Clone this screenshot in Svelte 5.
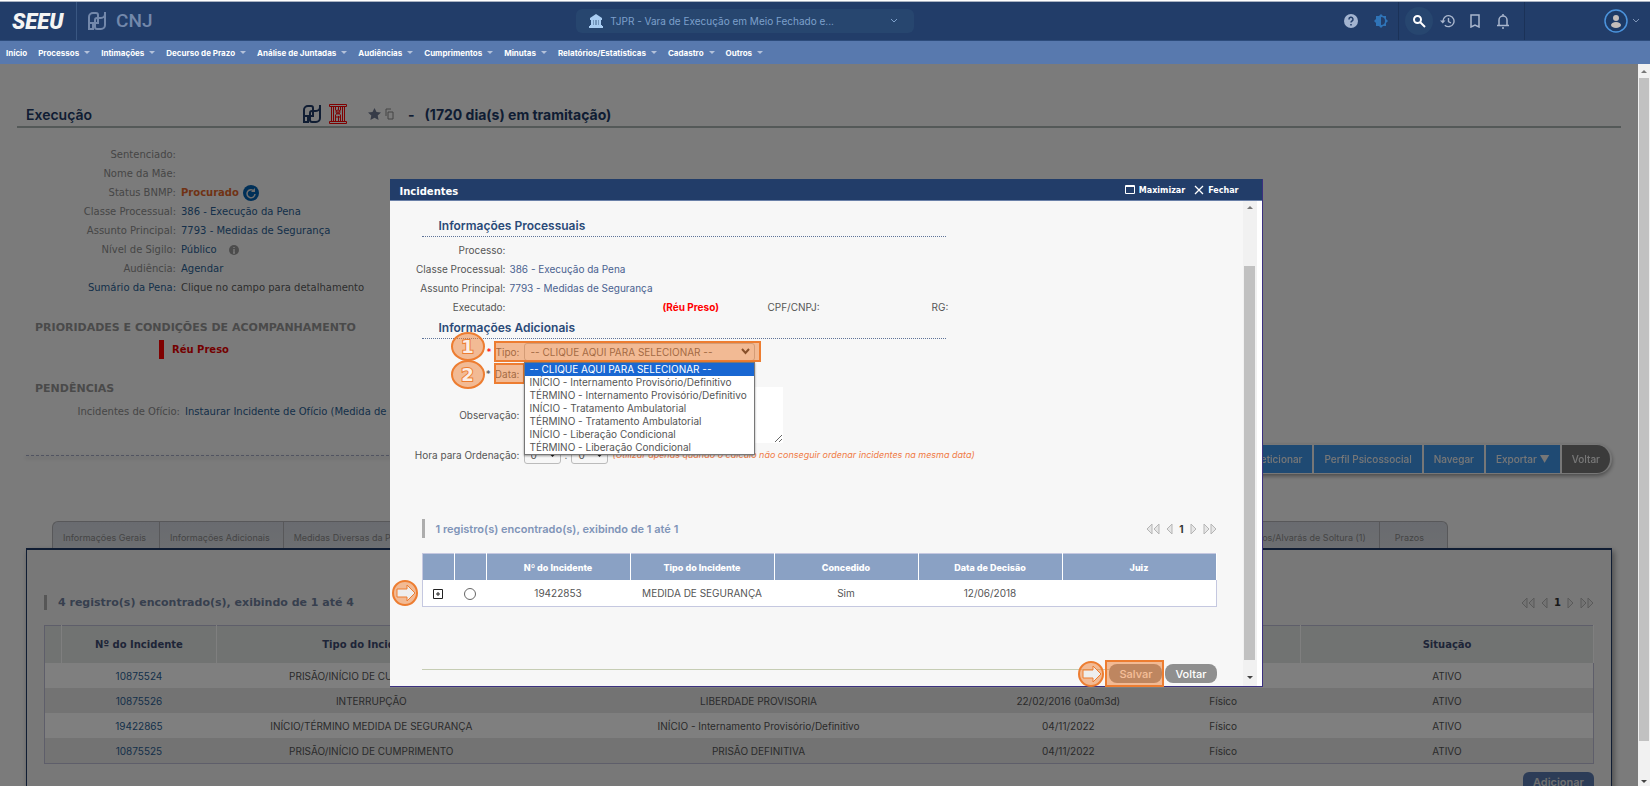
<script lang="ts">
  interface Incident {
    id: string
    type: string
    description: string
    date: string
    process: string
    status: string
  }

  const menu = [
    'Início',
    'Processos',
    'Intimações',
    'Decurso de Prazo',
    'Análise de Juntadas',
    'Audiências',
    'Cumprimentos',
    'Minutas',
    'Relatórios/Estatísticas',
    'Cadastro',
    'Outros',
  ]

  const tabs = [
    'Informações Gerais',
    'Informações Adicionais',
    'Medidas Diversas da Prisão',
    'Partes',
    'Movimentações',
    'Mandados/Alvarás de Soltura (1)',
    'Prazos',
  ]

  const incidents: Incident[] = [
    { id: '10875524', type: 'PRISÃO/INÍCIO DE CUMPRIMENTO', description: 'PRISÃO DEFINITIVA', date: '22/02/2016', process: 'Físico', status: 'ATIVO' },
    { id: '10875526', type: 'INTERRUPÇÃO', description: 'LIBERDADE PROVISORIA', date: '22/02/2016 (0a0m3d)', process: 'Físico', status: 'ATIVO' },
    { id: '19422865', type: 'INÍCIO/TÉRMINO MEDIDA DE SEGURANÇA', description: 'INÍCIO - Internamento Provisório/Definitivo', date: '04/11/2022', process: 'Físico', status: 'ATIVO' },
    { id: '10875525', type: 'PRISÃO/INÍCIO DE CUMPRIMENTO', description: 'PRISÃO DEFINITIVA', date: '04/11/2022', process: 'Físico', status: 'ATIVO' },
  ]

  const options = [
    '-- CLIQUE AQUI PARA SELECIONAR --',
    'INÍCIO - Internamento Provisório/Definitivo',
    'TÉRMINO - Internamento Provisório/Definitivo',
    'INÍCIO - Tratamento Ambulatorial',
    'TÉRMINO - Tratamento Ambulatorial',
    'INÍCIO - Liberação Condicional',
    'TÉRMINO - Liberação Condicional',
  ]

  let selected = $state(options[0])
  let listOpen = $state(true)
  let modalOpen = $state(true)

  function choose(option: string) {
    selected = option
    listOpen = false
  }
</script>

{#snippet pdpj()}
  <svg class="pdpj" viewBox="0 0 18 18" fill="none" stroke="currentColor" stroke-width="2">
    <path d="M5 11v6H1V5a4 4 0 0 1 4-4h3a2 2 0 0 1 2 2v8H1" />
    <path d="M17 0v13a4 4 0 0 1-4 4H9a2 2 0 0 1-2-2V8a2 2 0 0 1 2-2h4a4 4 0 0 0 4-4" />
  </svg>
{/snippet}

{#snippet arrow()}
  <svg class="arrow" viewBox="0 0 28 28">
    <circle cx="14" cy="14" r="12" fill="#ed7d31" fill-opacity=".5" stroke="#ed7d31" stroke-width="2" />
    <path d="M6 10h10V6l8 8-8 8v-4H6z" fill="#eee" stroke="#ed7d31" stroke-width="1" />
  </svg>
{/snippet}

{#snippet pager()}
  <div class="pager">
    <button type="button" aria-label="Primeira página">
      <svg width="14" height="12" viewBox="0 0 14 12"><path d="M6 1v10L1 6zM13 1v10L8 6z" /></svg>
    </button>
    <button type="button" aria-label="Página anterior">
      <svg width="7" height="12" viewBox="0 0 7 12"><path d="M6 1v10L1 6z" /></svg>
    </button>
    <b>1</b>
    <button type="button" aria-label="Próxima página">
      <svg width="7" height="12" viewBox="0 0 7 12"><path d="M1 1v10l5-5z" /></svg>
    </button>
    <button type="button" aria-label="Última página">
      <svg width="14" height="12" viewBox="0 0 14 12"><path d="M1 1v10l5-5zM8 1v10l5-5z" /></svg>
    </button>
  </div>
{/snippet}

{#snippet chevron()}
  <svg class="chevron" width="8" height="6" viewBox="0 0 8 6" fill="none" stroke="currentColor">
    <path d="M1 1l3 3 3-3" />
  </svg>
{/snippet}

<div class="page">
  <header class="topbar">
    <div class="brand">SEEU</div>
    <div class="partners">
      {@render pdpj()}
      <span class="cnj">CNJ</span>
    </div>
    <div class="court">
      <svg width="14" height="14" viewBox="0 0 14 14" fill="#a9cdf2">
        <path d="M7 0l6 4v2H1V4zM2 6h2v5H2zM5 6h1v5H5zM8 6h1v5H8zM10 6h2v5h-2zM1 11h12v1H1zM0 12h14v2H0z" />
        <path d="M4 6h6v5H4z" opacity=".6" />
      </svg>
      <select aria-label="Vara">
        <option>TJPR - Vara de Execução em Meio Fechado e...</option>
      </select>
      {@render chevron()}
    </div>
    <div class="tools">
      <div class="group help">
        <button type="button" aria-label="Ajuda">
          <svg width="14" height="14" viewBox="0 0 14 14">
            <circle cx="7" cy="7" r="7" fill="#a3b4d0" />
            <path d="M5 5.5a2 2 0 1 1 3 1.5Q7 7.5 7 8.5M7 10v1.5" fill="none" stroke="#223d69" stroke-width="1.5" />
          </svg>
        </button>
        <button type="button" aria-label="Contraste">
          <svg width="14" height="14" viewBox="0 0 14 14" fill="#2f74b8">
            <path d="M7 0l2 2h3v3l2 2-2 2v3H9l-2 2-2-2H2V9L0 7l2-2V2h3z" />
            <path d="M7 3a4 4 0 0 1 0 8z" fill="#223d69" />
          </svg>
        </button>
      </div>
      <div class="group shortcuts">
        <button type="button" class="round" aria-label="Pesquisar">
          <svg width="14" height="14" viewBox="0 0 14 14" fill="none" stroke="#fff" stroke-width="2">
            <circle cx="5.5" cy="5.5" r="3.5" />
            <path d="M8 8l5 5" />
          </svg>
        </button>
        <button type="button" aria-label="Histórico">
          <svg width="15" height="14" viewBox="0 0 15 14" fill="none" stroke="#a9b6cd" stroke-width="1.4">
            <path d="M3 7a5.5 5.5 0 1 1 1.8 4.2M8.5 4v3.5l2.5 1.5" />
            <path d="M0 6.5h5.5L2.8 9.5z" fill="#a9b6cd" stroke="none" />
          </svg>
        </button>
        <button type="button" aria-label="Favoritos">
          <svg width="12" height="14" viewBox="0 0 12 14" fill="none" stroke="#a9b6cd" stroke-width="1.5">
            <path d="M2 1h8v12l-4-2-4 2z" />
          </svg>
        </button>
        <button type="button" aria-label="Notificações">
          <svg width="14" height="16" viewBox="0 0 14 16" fill="none" stroke="#a9b6cd" stroke-width="1.5">
            <path d="M1 12.5h12M3 12V7a4 4 0 0 1 8 0v5M7 1v2M6 15h2" />
          </svg>
        </button>
      </div>
      <div class="group user">
        <button type="button" aria-label="Usuário">
          <svg width="24" height="24" viewBox="0 0 24 24">
            <circle cx="12" cy="12" r="11" fill="#1d3a66" stroke="#4b93dc" stroke-width="1.5" />
            <circle cx="12" cy="9" r="3" fill="#c3bdba" />
            <ellipse cx="12" cy="16" rx="5" ry="3" fill="#c3bdba" />
          </svg>
          {@render chevron()}
        </button>
      </div>
    </div>
  </header>

  <nav class="menu">
    {#each menu as item, i}
      <a href="#menu">{item}{#if i > 0}<span class="caret"></span>{/if}</a>
    {/each}
  </nav>

  <div class="workspace">
    <main>
      <div class="title">
        <h1>Execução</h1>
        {@render pdpj()}
        <svg class="jail" width="18" height="20" viewBox="0 0 18 20" fill="none" stroke="#f00">
          <path d="M.5.5h17v2H.5zM.5 17.5h17v2H.5zM2.5 3v14M4.5 3v14M13.5 3v14M15.5 3v14" />
          <path d="M6.5 3v3l5 5v6M11.5 3v3l-5 5v6M9.5 3v3M9.5 12v5M7 13h5" />
          <circle cx="9" cy="8" r="2" />
        </svg>
        <svg class="star" width="13" height="12" viewBox="0 0 13 12" fill="#6c7690">
          <path d="M6.5 0l2 4 4.5.6-3.3 3 .9 4.4-4.1-2.2L2.4 12l.9-4.4L0 4.6 4.5 4z" />
        </svg>
        <svg class="copy" width="9" height="12" viewBox="0 0 9 12" fill="none" stroke="#888">
          <path d="M1 8V1h5M3 4h5v7H3z" />
        </svg>
        <strong>-</strong>
        <strong class="days">(1720 dia(s) em tramitação)</strong>
      </div>

      <dl class="fields">
        <dt>Sentenciado:</dt>
        <dd></dd>
        <dt>Nome da Mãe:</dt>
        <dd></dd>
        <dt>Status BNMP:</dt>
        <dd>
          <b class="wanted">Procurado</b>
          <svg width="16" height="16" viewBox="0 0 16 16">
            <circle cx="8" cy="8" r="8" fill="#0060b0" />
            <path d="M11 6a4 4 0 1 0 1 3" fill="none" stroke="#ddd" stroke-width="1.5" />
            <path d="M12 3v4H8z" fill="#ddd" />
          </svg>
        </dd>
        <dt>Classe Processual:</dt>
        <dd><a href="#classe">386 - Execução da Pena</a></dd>
        <dt>Assunto Principal:</dt>
        <dd><a href="#assunto">7793 - Medidas de Segurança</a></dd>
        <dt>Nível de Sigilo:</dt>
        <dd>
          <a href="#sigilo">Público</a>
          <svg class="info" width="10" height="10" viewBox="0 0 10 10">
            <circle cx="5" cy="5" r="5" fill="#999" />
            <path d="M5 2v1M5 4v4M4 8h2" stroke="#eee" stroke-width="1.5" />
          </svg>
        </dd>
        <dt>Audiência:</dt>
        <dd><a href="#audiencia">Agendar</a></dd>
        <dt><a href="#sumario">Sumário da Pena:</a></dt>
        <dd>Clique no campo para detalhamento</dd>
      </dl>

      <h2>PRIORIDADES E CONDIÇÕES DE ACOMPANHAMENTO</h2>
      <p class="priority">Réu Preso</p>
      <h2>PENDÊNCIAS</h2>
      <dl class="fields pending">
        <dt>Incidentes de Ofício:</dt>
        <dd><a href="#oficio">Instaurar Incidente de Ofício (Medida de Segurança)</a></dd>
      </dl>

      <div class="actions">
        <hr />
        <button type="button">Peticionar</button>
        <button type="button">Perfil Psicossocial</button>
        <button type="button">Navegar</button>
        <button type="button">Exportar ▼</button>
        <button type="button" class="back">Voltar</button>
      </div>

      <div class="tabs" role="tablist">
        {#each tabs as tab}
          <button type="button" role="tab" class:grow={tab === 'Movimentações'}>{tab}</button>
        {/each}
      </div>

      <section class="panel">
        <div class="summary">
          <strong>4 registro(s) encontrado(s), exibindo de 1 até 4</strong>
          {@render pager()}
        </div>
        <table class="incidents">
          <colgroup>
            <col class="c-icon" />
            <col class="c-id" />
            <col class="c-type" />
            <col class="c-desc" />
            <col class="c-date" />
            <col class="c-proc" />
            <col />
          </colgroup>
          <thead>
            <tr>
              <th></th>
              <th>Nº do Incidente</th>
              <th>Tipo do Incidente</th>
              <th>Descrição</th>
              <th>Data</th>
              <th>Tipo Processo</th>
              <th>Situação</th>
            </tr>
          </thead>
          <tbody>
            {#each incidents as row}
              <tr>
                <td></td>
                <td><a href="#incidente">{row.id}</a></td>
                <td>{row.type}</td>
                <td>{row.description}</td>
                <td>{row.date}</td>
                <td>{row.process}</td>
                <td>{row.status}</td>
              </tr>
            {/each}
          </tbody>
        </table>
        <button type="button" class="add">Adicionar</button>
      </section>
    </main>
    {#if modalOpen}
      <div class="backdrop"></div>
    {/if}
    <div class="scrollbar">
      <span class="up"></span>
      <span class="thumb"></span>
      <span class="down"></span>
    </div>
  </div>

  {#if modalOpen}
    <div class="layer">
      <div class="modal" role="dialog" aria-modal="true" aria-labelledby="modal-title">
        <div class="modal-head">
          <h2 id="modal-title">Incidentes</h2>
          <button type="button">
            <svg width="10" height="10" viewBox="0 0 10 10" fill="none" stroke="#fff">
              <path d="M.5.5h9v8h-9zM1 1.5h8" />
            </svg>
            Maximizar
          </button>
          <button type="button" onclick={() => (modalOpen = false)}>
            <svg width="10" height="10" viewBox="0 0 10 10" fill="none" stroke="#fff" stroke-width="1.3">
              <path d="M1 1l8 8M9 1L1 9" />
            </svg>
            Fechar
          </button>
        </div>

        <div class="modal-body">
          <div class="modal-content">
            <h3>Informações Processuais</h3>
            <dl class="process">
              <dt>Processo:</dt>
              <dd></dd>
              <dt>Classe Processual:</dt>
              <dd>386 - Execução da Pena</dd>
              <dt>Assunto Principal:</dt>
              <dd>7793 - Medidas de Segurança</dd>
              <dt>Executado:</dt>
              <dd class="person">
                <b>(Réu Preso)</b>
                <span>CPF/CNPJ:</span>
                <span>RG:</span>
              </dd>
            </dl>

            <h3>Informações Adicionais</h3>
            <form class="form">
              <div class="row">
                <label for="tipo"><i class="required">*</i> Tipo:</label>
                <div class="select tipo">
                  <select id="tipo" bind:value={selected} onmousedown={() => (listOpen = !listOpen)}>
                    {#each options as option}
                      <option>{option}</option>
                    {/each}
                  </select>
                  <svg width="9" height="7" viewBox="0 0 9 7" fill="none" stroke="#222" stroke-width="2">
                    <path d="M1 1l3.5 4L8 1" />
                  </svg>
                  {#if listOpen}
                    <ul class="list" role="listbox" aria-label="Tipo">
                      {#each options as option}
                        <!-- svelte-ignore a11y_click_events_have_key_events -->
                        <li role="option" aria-selected={option === selected} onclick={() => choose(option)}>{option}</li>
                      {/each}
                    </ul>
                  {/if}
                </div>
                <span class="step">1</span>
                <span class="mark mark-tipo"></span>
              </div>
              <div class="row date">
                <label for="data"><i>*</i> Data:</label>
                <input id="data" type="text" />
                <span class="step">2</span>
                <span class="mark mark-data"></span>
              </div>
              <div class="row notes">
                <label for="obs">Observação:</label>
                <textarea id="obs"></textarea>
              </div>
              <div class="row">
                <label for="hora">Hora para Ordenação:</label>
                <div class="select hour">
                  <select id="hora"><option>0</option></select>
                  <svg width="7" height="5" viewBox="0 0 7 5" fill="none" stroke="#222" stroke-width="2"><path d="M1 1l2.5 2.5L6 1" /></svg>
                </div>
                <span>:</span>
                <div class="select hour">
                  <select aria-label="Minuto"><option>0</option></select>
                  <svg width="7" height="5" viewBox="0 0 7 5" fill="none" stroke="#222" stroke-width="2"><path d="M1 1l2.5 2.5L6 1" /></svg>
                </div>
                <em>(Utilizar apenas quando o cálculo não conseguir ordenar incidentes na mesma data)</em>
              </div>
            </form>

            <div class="summary found">
              <strong>1 registro(s) encontrado(s), exibindo de 1 até 1</strong>
              {@render pager()}
            </div>
            <div class="result">
              <table>
                <colgroup>
                  <col class="r-icon" />
                  <col class="r-icon" />
                  <col class="r-data" />
                  <col class="r-data" />
                  <col class="r-data" />
                  <col class="r-data" />
                  <col />
                </colgroup>
                <thead>
                  <tr>
                    <th></th>
                    <th></th>
                    <th>Nº do Incidente</th>
                    <th>Tipo do Incidente</th>
                    <th>Concedido</th>
                    <th>Data de Decisão</th>
                    <th>Juiz</th>
                  </tr>
                </thead>
                <tbody>
                  <tr>
                    <td>
                      <button type="button" class="expand" aria-label="Expandir">
                        <svg width="10" height="10" viewBox="0 0 10 10" fill="none" stroke="#222">
                          <path d="M.5.5h9v9h-9zM3 5h4M5 3v4" />
                        </svg>
                      </button>
                    </td>
                    <td><input type="radio" name="incidente" aria-label="19422853" /></td>
                    <td>19422853</td>
                    <td>MEDIDA DE SEGURANÇA</td>
                    <td>Sim</td>
                    <td>12/06/2018</td>
                    <td></td>
                  </tr>
                </tbody>
              </table>
              {@render arrow()}
            </div>

            <div class="footer">
              <hr />
              <div class="save">
                <button type="button">Salvar</button>
                <span class="mark"></span>
                {@render arrow()}
              </div>
              <button type="button">Voltar</button>
            </div>
          </div>
          <div class="scrollbar inner">
            <span class="up"></span>
            <span class="thumb"></span>
            <span class="down"></span>
          </div>
        </div>
      </div>
    </div>
  {/if}
</div>

<style>
  :global(body) {
    margin: 0;
    overflow: hidden;
  }

  :global(button),
  :global(input),
  :global(select),
  :global(textarea) {
    margin: 0;
    padding: 0;
    border: 0;
    background: none;
    font: inherit;
    color: inherit;
    box-sizing: border-box;
  }

  :global(h1),
  :global(h2),
  :global(h3),
  :global(p),
  :global(dl),
  :global(dd),
  :global(ul),
  :global(hr) {
    margin: 0;
    padding: 0;
  }

  :global(a) {
    color: inherit;
    text-decoration: none;
  }

  :global(select) {
    appearance: none;
    outline: none;
  }

  .page {
    position: relative;
    display: flex;
    flex-direction: column;
    height: 100vh;
    overflow: hidden;
    background: #fff;
    font-family: Inter, 'Liberation Sans', sans-serif;
    font-size: 10px;
    color: #555;
  }

  svg {
    display: block;
    flex: none;
  }

  /* top bar */
  .topbar {
    display: grid;
    grid-template-columns: 77px 19fr 338px 28fr;
    align-items: center;
    height: 38px;
    margin-top: 1px;
    border-top: 1px solid #aab3c2;
    border-bottom: 1px solid #2d4c7c;
    background: #223d69;
  }

  .brand {
    display: flex;
    align-items: center;
    height: 38px;
    padding-left: 12px;
    border-right: 1px solid #3a5782;
    box-sizing: border-box;
    color: #f4f4f4;
    font: italic 900 22px Roboto, sans-serif;
  }

  .partners {
    display: flex;
    align-items: center;
    gap: 10px;
    padding-left: 11px;
    color: #7388ab;
  }

  .pdpj {
    width: 18px;
    height: 18px;
  }

  .cnj {
    font: 500 19px/20px Roboto, sans-serif;
  }

  .court {
    display: flex;
    align-items: center;
    height: 24px;
    padding: 0 16px 0 13px;
    border-radius: 6px;
    background: #27466f;
    color: #7da0cb;
  }

  .court select {
    flex: 1;
    padding-left: 7px;
  }

  .tools {
    display: flex;
    justify-content: flex-end;
  }

  .group {
    display: flex;
    align-items: center;
    height: 38px;
    border-left: 1px solid #1b3258;
    box-sizing: border-box;
  }

  .group.help {
    gap: 16px;
    padding-right: 10px;
    border-left: 0;
  }

  .group button {
    display: flex;
    align-items: center;
    justify-content: center;
    height: 28px;
    gap: 4px;
    color: #7f95b8;
  }

  .group.shortcuts {
    width: 126px;
    padding-left: 6px;
  }

  .shortcuts button {
    width: 28px;
  }

  .round {
    border-radius: 50%;
    background: #27466f;
  }

  .group.user {
    justify-content: flex-end;
    width: 126px;
    padding-right: 10px;
  }

  .menu {
    display: flex;
    align-items: center;
    gap: 11px;
    height: 23px;
    padding-left: 6px;
    background: #5879ae;
    color: #fff;
    font-size: 8px;
    font-weight: 700;
    white-space: nowrap;
  }

  .menu a {
    display: flex;
    align-items: center;
  }

  .caret {
    margin-left: 5px;
    border: 3px solid transparent;
    border-top-color: #b4c2da;
    border-bottom: 0;
  }

  /* page content */
  .workspace {
    position: relative;
    display: flex;
    flex: 1;
    min-height: 0;
  }

  main {
    flex: 1;
    min-width: 0;
    overflow: hidden;
    background: #f7f7f7;
    font-family: 'DejaVu Sans', sans-serif;
  }

  .backdrop {
    position: absolute;
    inset: 0 12px 0 0;
    background: rgba(0, 0, 0, 0.5);
  }

  .title {
    display: flex;
    align-items: center;
    height: 22px;
    margin: 39px 17px 0;
    padding: 0 0 1px 9px;
    border-bottom: 2px solid #a9b3b0;
    color: #203a66;
    font: 600 14px Inter, sans-serif;
  }

  .title h1 {
    width: 277px;
    font: inherit;
  }

  .jail {
    margin: 0 21px 0 8px;
  }

  .copy {
    margin: 0 14px 0 4px;
  }

  .title .days {
    margin-left: 10px;
  }

  .title strong {
    font-weight: 700;
  }

  .fields {
    display: grid;
    grid-template-columns: 176px 1fr;
    grid-auto-rows: 19px;
    align-items: center;
    column-gap: 5px;
    margin-top: 17px;
    color: #5c5c5c;
  }

  .fields dt {
    color: #8c8c8c;
    text-align: right;
  }

  .fields dd {
    display: flex;
    align-items: center;
    gap: 4px;
  }

  .fields a {
    color: #2a5f94;
  }

  .fields .info {
    margin-left: 8px;
  }

  .wanted {
    color: #e0652a;
  }

  .fields.pending {
    grid-template-columns: 180px 1fr;
    margin-top: 4px;
  }

  main h2 {
    margin: 20px 0 0 35px;
    color: #949494;
    font-size: 11px;
    line-height: 19px;
  }

  .fields + h2 {
    margin-top: 21px;
  }

  .priority {
    margin: 3px 0 0 159px;
    padding-left: 8px;
    border-left: 5px solid #f00;
    color: #e80000;
    font-weight: 700;
    line-height: 19px;
  }

  .actions {
    display: flex;
    margin: 23px 26px 0;
    filter: drop-shadow(0 2px 2px rgba(0, 0, 0, 0.4));
    font: 500 10px Inter, sans-serif;
  }

  .actions hr {
    flex: 1;
    height: 0;
    margin: 11px 300px 0 0;
    border: 0;
    border-top: 1px dashed #a3a9c4;
  }

  .actions button {
    height: 30px;
    padding: 0 10px;
    border: solid #eee;
    border-width: 1px 2px 1px 0;
    background: #3f94e6;
    color: #eee;
  }

  .actions .back {
    border-radius: 0 15px 15px 0;
    background: #777;
  }

  .tabs {
    display: flex;
    height: 27px;
    margin: 47px 190px 0 52px;
  }

  .tabs button {
    padding: 5px 13px 0 10px;
    border-top: 1px solid #b0b0b4;
    border-left: 1px solid #b0b0b4;
    background: linear-gradient(#d3d7e0, #dadde2);
    color: #8a8a8a;
    font: 9px Inter, sans-serif;
    white-space: nowrap;
  }

  .tabs button:first-child {
    border-top-left-radius: 6px;
  }

  .tabs button:last-child {
    padding: 5px 23px 0 15px;
    border-right: 1px solid #b0b0b4;
    border-top-right-radius: 6px;
  }

  .tabs .grow {
    flex: 1;
  }

  .panel {
    height: 300px;
    margin: 0 26px;
    padding: 45px 17px 0;
    border: 1px solid #203a66;
    border-top-width: 2px;
    background: #f1f1f1;
    box-shadow: 2px 3px 6px rgba(0, 0, 0, 0.4);
  }

  .summary {
    display: flex;
    align-items: center;
    justify-content: space-between;
    height: 15px;
    padding-left: 11px;
    border-left: 3px solid #adadad;
    color: #6f7f9d;
    font-size: 11px;
  }

  .pager {
    display: flex;
    align-items: center;
    gap: 6px;
    color: #333;
    font-size: 10px;
  }

  .pager path {
    fill: #e6e6e6;
    stroke: #b5b5b5;
  }

  table {
    width: 100%;
    table-layout: fixed;
    border-collapse: collapse;
    font-family: Inter, sans-serif;
    text-align: center;
  }

  td,
  th {
    padding: 0;
  }

  .incidents {
    margin-top: 15px;
    border: 1px solid #bcbcd4;
    color: #555;
  }

  .c-icon {
    width: 17px;
  }

  .c-id {
    width: 10%;
  }

  .c-type {
    width: 20%;
  }

  .c-desc {
    width: 30%;
  }

  .c-date,
  .c-proc {
    width: 10%;
  }

  .incidents th {
    height: 37px;
    border-right: 1px solid #fff;
    background: #e3e6e5;
    color: #3d4b70;
    font-family: 'DejaVu Sans', sans-serif;
  }

  .incidents td {
    height: 25px;
    background: #fff;
  }

  .incidents tr:nth-child(even) td {
    background: #e6e6e6;
  }

  .incidents a {
    color: #2a5f94;
  }

  .add {
    display: block;
    width: 71px;
    height: 20px;
    margin: 8px 0 0 auto;
    border-radius: 6px;
    background: #5879ae;
    color: #ddd;
    font: 600 11px Inter, sans-serif;
  }

  /* scrollbars */
  .scrollbar {
    display: flex;
    flex-direction: column;
    align-items: center;
    width: 12px;
    padding: 6px 0 3px;
    background: #f1f1f1;
    box-sizing: border-box;
  }

  .scrollbar .thumb {
    flex: 1;
    width: 10px;
    margin: 5px 0 39px;
    background: #c1c1c1;
  }

  .up,
  .down {
    border: 3px solid transparent;
  }

  .up {
    border-top: 0;
    border-bottom-color: #777;
  }

  .down {
    border-top-color: #444;
    border-bottom: 0;
  }

  .scrollbar.inner {
    width: 14px;
    margin-right: 5px;
    padding: 5px 0 7px;
  }

  .inner .thumb {
    width: 11px;
    margin: 57px 0 16px;
  }

  /* modal */
  .layer {
    position: absolute;
    inset: 0;
    display: flex;
    align-items: flex-start;
    justify-content: center;
    padding: 179px 0 0 2px;
  }

  .modal {
    width: 90%;
    max-width: 873px;
    border: solid #3b3080;
    border-width: 0 1px 1px 0;
    background: #fff;
    box-sizing: border-box;
  }

  .modal-head {
    display: flex;
    align-items: center;
    gap: 9px;
    height: 22px;
    padding: 1px 23px 0 10px;
    border-bottom: 1px solid #6a80a8;
    background: #223d69;
    color: #fff;
    font-family: 'DejaVu Sans', sans-serif;
    box-sizing: border-box;
  }

  .modal-head h2 {
    flex: 1;
    padding-top: 2px;
    font-size: 10px;
  }

  .modal-head button {
    display: flex;
    align-items: center;
    gap: 4px;
    font-size: 8px;
    font-weight: 700;
  }

  .modal-body {
    display: flex;
  }

  .modal-content {
    flex: 1;
    min-width: 0;
    padding: 15px 26px 0 32px;
    background: #f7f7f7;
  }

  h3 {
    width: 507px;
    padding-left: 17px;
    border-bottom: 1px dotted #5f7499;
    color: #2b4a78;
    font-size: 12px;
    font-weight: 600;
    line-height: 20px;
  }

  .process {
    display: grid;
    grid-template-columns: 84px 437px;
    grid-auto-rows: 19px;
    align-items: center;
    column-gap: 4px;
    margin: 3px 0 2px;
    white-space: nowrap;
  }

  .process dt {
    justify-self: end;
  }

  .process dd {
    color: #4a6290;
  }

  .process .person {
    display: grid;
    grid-template-columns: 105px 164px auto;
    padding-left: 153px;
    color: #555;
  }

  .person b {
    color: #f00;
  }

  .form {
    display: flex;
    flex-direction: column;
    padding-top: 2px;
  }

  .row {
    position: relative;
    display: flex;
    align-items: center;
    gap: 4px;
    height: 21px;
  }

  .row label {
    display: flex;
    justify-content: flex-end;
    width: 98px;
    white-space: nowrap;
  }

  .row i {
    margin-right: 4px;
    font-style: normal;
  }

  .row .required {
    color: #f00;
  }

  .row input {
    width: 90px;
    height: 18px;
    background: #fff;
  }

  .row em {
    color: #f07a45;
    font-size: 9px;
    white-space: nowrap;
  }

  .date {
    height: 23px;
  }

  .notes {
    height: 59px;
  }

  .notes textarea {
    width: 259px;
    height: 56px;
    background: #fff;
  }

  .select {
    position: relative;
    display: flex;
    align-items: center;
  }

  .select select {
    width: 100%;
    height: 18px;
    padding-left: 6px;
    border: 1px solid #bbb;
    border-radius: 3px;
    background: #f7f7f7;
  }

  .select svg {
    position: absolute;
    right: 5px;
    pointer-events: none;
  }

  .tipo {
    width: 231px;
  }

  .hour {
    width: 37px;
  }

  .list {
    position: absolute;
    z-index: 2;
    top: 19px;
    left: 0;
    right: 0;
    border: 1px solid #777;
    background: #fff;
    box-shadow: 0 1px 2px rgba(0, 0, 0, 0.4);
    list-style: none;
  }

  .list li {
    height: 13px;
    padding-left: 5px;
    color: #555;
    line-height: 13px;
    white-space: nowrap;
  }

  .list li[aria-selected='true'] {
    background: #1967d2;
    color: #fff;
  }

  .mark {
    position: absolute;
    border: 2px solid #ed7d31;
    background: rgba(237, 125, 49, 0.5);
    box-sizing: border-box;
    pointer-events: none;
  }

  .mark-tipo {
    inset: 0 auto 0 72px;
    width: 267px;
  }

  .mark-data {
    inset: 1px auto 1px 72px;
    width: 31px;
  }

  .step {
    position: absolute;
    left: 29px;
    top: -9px;
    width: 34px;
    height: 29px;
    border: 2px solid #ed7d31;
    border-radius: 50%;
    background: rgba(237, 125, 49, 0.5);
    box-sizing: border-box;
    color: #fbeee6;
    font: 700 18px/25px 'DejaVu Sans', sans-serif;
    text-align: center;
    paint-order: stroke fill;
    -webkit-text-stroke: 2px #ed7d31;
  }

  .date .step {
    top: -2px;
  }

  .found {
    height: 19px;
    margin-top: 54px;
    color: #7f94b8;
  }

  .found strong {
    font-weight: 600;
  }

  .result {
    position: relative;
    margin-top: 15px;
  }

  .result table {
    border: 1px solid #c5c8e0;
    background: #fff;
  }

  .r-icon {
    width: 32px;
  }

  .r-data {
    width: 144px;
  }

  .result th {
    height: 26px;
    border-right: 1px solid #fff;
    background: #8aa1c4;
    color: #fff;
    font-size: 9px;
    font-weight: 800;
  }

  .result td {
    height: 26px;
  }

  .expand {
    vertical-align: middle;
  }

  .result input {
    width: 12px;
    height: 12px;
    border: 1px solid #666;
    border-radius: 50%;
    appearance: none;
    vertical-align: middle;
  }

  .arrow {
    position: absolute;
    width: 28px;
    height: 28px;
  }

  .result .arrow {
    left: -31px;
    bottom: 0;
  }

  .footer {
    display: flex;
    gap: 3px;
    margin-top: 57px;
    padding-bottom: 3px;
  }

  .footer hr {
    flex: 1;
    height: 0;
    margin: 5px -3px 0 0;
    border: 0;
    border-top: 1px solid #c6cdb4;
  }

  .footer button {
    height: 19px;
    padding: 0 10px;
    border-radius: 8px;
    background: #8f8f8f;
    color: #fff;
    font-size: 11px;
    font-weight: 500;
  }

  .save {
    position: relative;
  }

  .save .mark {
    inset: -4px -2px -4px -4px;
  }

  .save .arrow {
    left: -32px;
    top: -4px;
  }
</style>
